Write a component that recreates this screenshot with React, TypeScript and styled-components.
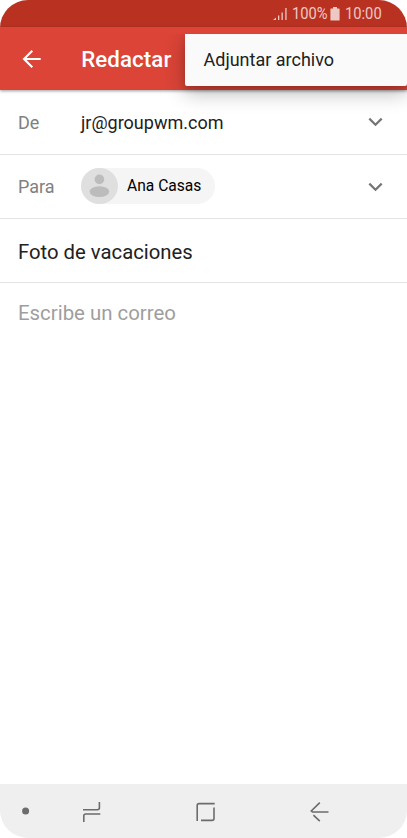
import React from 'react';
import styled, { createGlobalStyle } from 'styled-components';

const GlobalStyle = createGlobalStyle`
  * { box-sizing: border-box; }
  body { margin: 0; background: #fff; }
`;

const Screen = styled.main`
  position: relative;
  display: flex;
  flex-direction: column;
  width: 407px;
  height: 838px;
  overflow: hidden;
  border-radius: 28px;
  background: #fff;
  font-family: Roboto, 'Liberation Sans', sans-serif;
`;

const StatusBar = styled.div`
  display: flex;
  align-items: center;
  height: 27px;
  flex: none;
  padding-left: 273px;
  background: #b93221;
  color: #edc8c4;
`;

const StatusText = styled.span<{ $left: number; $width: number }>`
  margin-left: ${(p) => p.$left}px;
  width: ${(p) => p.$width}px;
  font-size: 16px;
  line-height: 27px;
  white-space: nowrap;
  transform: scaleX(0.92);
  transform-origin: left;
`;

const AppBar = styled.header`
  position: relative;
  z-index: 1;
  display: flex;
  align-items: center;
  height: 63px;
  flex: none;
  padding: 2px 0 0 22px;
  background: #db4437;
  color: #fff;
  box-shadow: 0 1px 3px rgba(0, 0, 0, 0.4);
`;

const BackArrow = styled.svg`
  display: block;
  flex: none;
  margin-top: -2px;
  fill: none;
`;

const Title = styled.h1`
  margin: -2px 0 0 39.2px;
  font-size: 22.3px;
  font-weight: 500;
  line-height: 30px;
  letter-spacing: 0.08px;
`;

const Menu = styled.div`
  position: absolute;
  z-index: 2;
  top: 34px;
  right: 0;
  width: 222px;
  height: 52px;
  padding-left: 18.5px;
  border-radius: 0 0 2px 2px;
  background: #fafafa;
  color: #212121;
  font-size: 18px;
  line-height: 51px;
  box-shadow: 0 7px 20px rgba(0, 0, 0, 0.27), 0 3px 6px rgba(0, 0, 0, 0.12);
  clip-path: inset(0 0 -32px -32px);
`;

const Row = styled.div<{ $height: number }>`
  display: flex;
  align-items: center;
  flex: none;
  height: ${(p) => p.$height}px;
  padding: 0 24px 0 18px;
  border-bottom: 1px solid #e4e4e4;
`;

const Label = styled.span`
  width: 63px;
  color: #808080;
  font-size: 18px;
`;

const Address = styled.span`
  flex: 1;
  color: #212121;
  font-size: 18px;
`;

const Recipients = styled.div`
  flex: 1;
  display: flex;
  padding-bottom: 1px;
`;

const Chip = styled.div`
  display: flex;
  align-items: center;
  gap: 9px;
  width: 134px;
  height: 36px;
  border-radius: 18px;
  background: #f5f5f5;
  color: #000;
  font-size: 15.6px;
`;

const Subject = styled.span`
  color: #212121;
  font-size: 20.3px;
  padding-top: 3px;
`;

const Body = styled.div`
  flex: 1;
  padding: 17px 18px;
  color: #9e9e9e;
  font-size: 20.4px;
  line-height: 27px;
`;

const NavBar = styled.nav`
  display: flex;
  flex: none;
  height: 54px;
  background: #efefef;
`;

const Icon = styled.svg`
  display: block;
  flex: none;
  fill: none;
`;

const Chevron = () => (
  <Icon width="15" height="10" viewBox="0 0 15 10" stroke="#757575" strokeWidth="2.2">
    <path d="M1.3 1.6 7.5 7.7 13.7 1.6" />
  </Icon>
);

export default function App() {
  return (
    <>
      <GlobalStyle />
      <Screen>
        <StatusBar>
          <Icon width="15" height="14" viewBox="0 0 15 14">
            <path fill="currentColor" d="M0 13 3 10.5V13ZM5 8.5H6.3V13H5ZM8.5 5.5H9.8V13H8.5ZM12.3 1H13.6V13H12.3Z" />
          </Icon>
          <StatusText $left={4} $width={38}>100%</StatusText>
          <Icon width="10" height="14" viewBox="0 0 10 14">
            <path fill="currentColor" d="M3 0H7V1.5H9Q9.6 1.5 9.6 2.1V13Q9.6 13.6 9 13.6H1Q.4 13.6 .4 13V2.1Q.4 1.5 1 1.5H3Z" />
          </Icon>
          <StatusText $left={4.5} $width={40}>10:00</StatusText>
        </StatusBar>
        <AppBar>
          <BackArrow width="20" height="20" viewBox="0 0 20 20" stroke="currentColor" strokeWidth="2.1">
            <path d="M18.7 10H2.5M10.3 1.7 2 10 10.3 18.3" />
          </BackArrow>
          <Title>Redactar</Title>
        </AppBar>
        <Menu>Adjuntar archivo</Menu>
        <Row $height={65}>
          <Label>De</Label>
          <Address>jr@groupwm.com</Address>
          <Chevron />
        </Row>
        <Row $height={64}>
          <Label>Para</Label>
          <Recipients>
            <Chip>
              <Icon width="37" height="36" viewBox="0 0 37 36">
                <ellipse cx="18.5" cy="18" rx="18.5" ry="18" fill="#dfdfdf" />
                <circle cx="18.4" cy="11.4" r="4.8" fill="#bcbcbc" />
                <ellipse cx="18.4" cy="23.6" rx="9.8" ry="5.4" fill="#bcbcbc" />
              </Icon>
              Ana Casas
            </Chip>
          </Recipients>
          <Chevron />
        </Row>
        <Row $height={64}>
          <Subject>Foto de vacaciones</Subject>
        </Row>
        <Body>Escribe un correo</Body>
        <NavBar>
          <Icon width="407" height="54" viewBox="0 0 407 54" stroke="#6c6c6c" strokeWidth="1.6">
            <circle cx="25.6" cy="27" r="3.5" fill="#6c6c6c" stroke="none" />
            <path d="M83 25.7H97.5Q99.4 25.7 99.4 23.8V18M100.3 30H85.7Q83.8 30 83.8 31.9V38" />
            <path d="M214.7 19.6H199Q197.2 19.6 197.2 21.4V37M214 23.5V34.5Q214 36.4 212.1 36.4H201" />
            <path d="M328.5 28H312.5L311.3 27 319.8 18.6M313.4 31.2 319.8 37.2" />
          </Icon>
        </NavBar>
      </Screen>
    </>
  );
}
